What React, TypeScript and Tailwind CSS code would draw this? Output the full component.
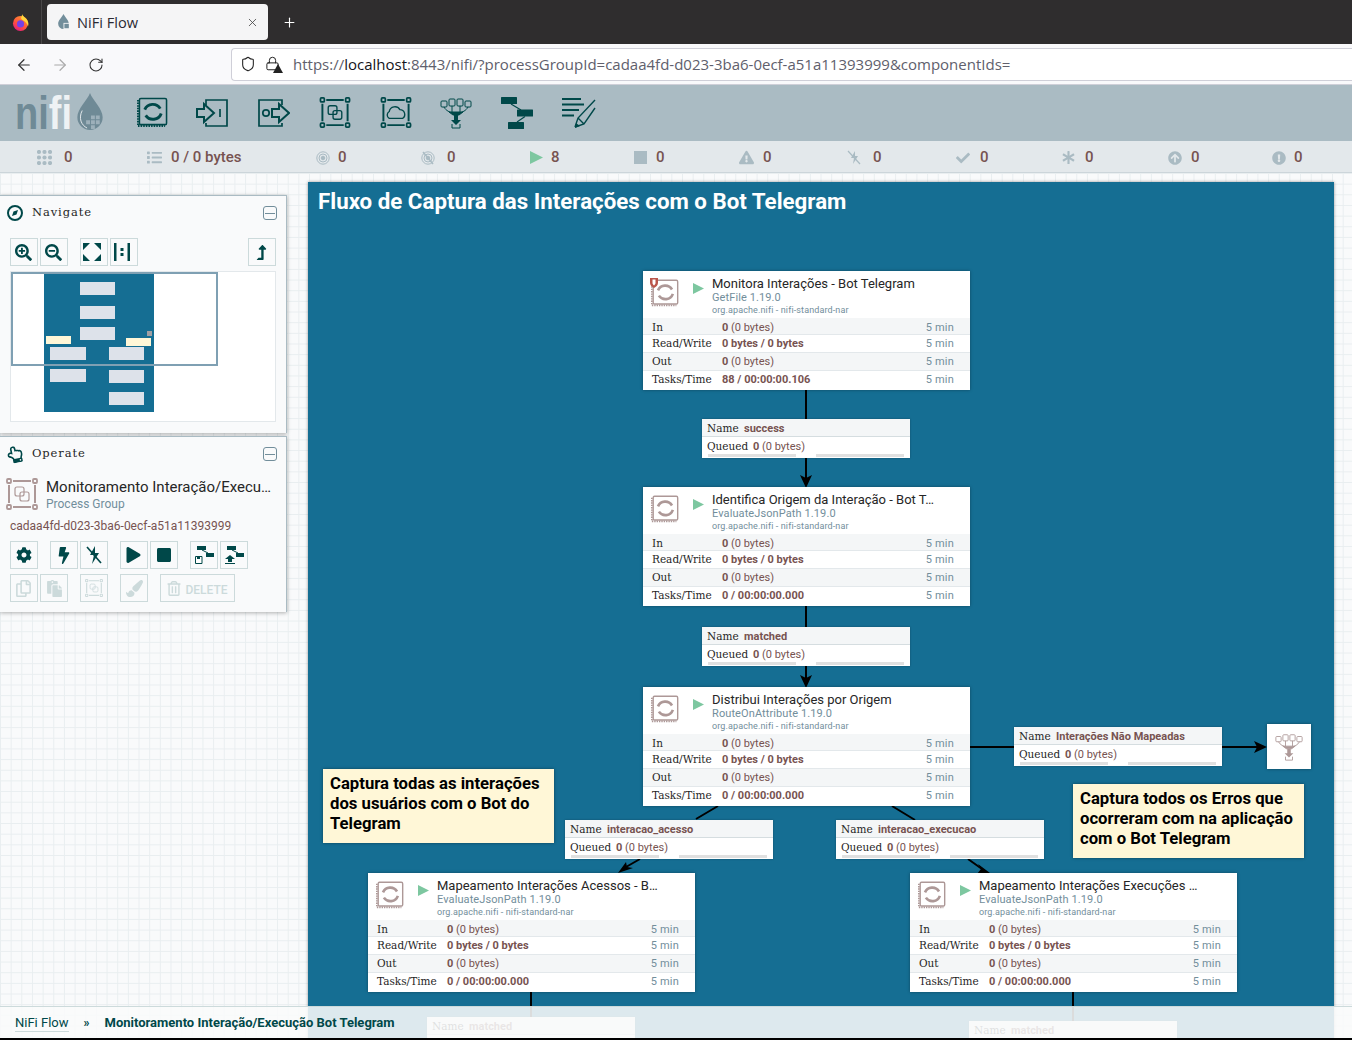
import { ArrowLeft, ArrowRight, RotateCw, Shield, Lock, X, Plus } from "lucide-react";
import {
  FaAsterisk,
  FaArrowCircleUp,
  FaBolt,
  FaCheck,
  FaCog,
  FaExclamationCircle,
  FaExclamationTriangle,
  FaList,
  FaPaintBrush,
  FaPlay,
  FaRegCopy,
  FaPaste,
  FaRegHandPointUp,
  FaRegTrashAlt,
  FaSearchMinus,
  FaSearchPlus,
  FaStop,
  FaLevelUpAlt,
} from "react-icons/fa";
import type { ReactNode } from "react";

const TOP = 173;

// nifi glyphs drawn by hand, the icon packs don't have them
function ProcessorIcon({ className = "", color = "#004849" }: { className?: string; color?: string }) {
  return (
    <svg viewBox="0 0 32 32" className={className} fill="none" stroke={color}>
      <rect x="2.5" y="1.5" width="28" height="27" rx="1.5" strokeWidth="1.6" />
      <path d="M1 3v27h28" strokeWidth="2" strokeDasharray="1.6 1.1" />
      <path d="M8 13a9 9 0 0 1 16-1" strokeWidth="3" />
      <path d="M25 17a9 9 0 0 1-16 2" strokeWidth="3" />
    </svg>
  );
}

function InputPortIcon({ className = "" }: { className?: string }) {
  return (
    <svg viewBox="0 0 32 28" className={className} fill="none" stroke="#004849" strokeWidth="1.7">
      <path d="M10 6V1h21v26H10v-3" />
      <path d="M1 10h7V5l10 9-10 9v-5H1z" strokeWidth="2" />
      <path d="M24 10v8" />
    </svg>
  );
}

function OutputPortIcon({ className = "" }: { className?: string }) {
  return (
    <svg viewBox="0 0 32 28" className={className} fill="none" stroke="#004849" strokeWidth="1.7">
      <path d="M24 6V1H1v26h23v-3" />
      <circle cx="8" cy="14" r="3.2" />
      <path d="M14 10h7V5l10 9-10 9v-5h-7z" strokeWidth="2" />
    </svg>
  );
}

function GroupFrame({ children, className = "", color = "#004849" }: { children: ReactNode; className?: string; color?: string }) {
  return (
    <svg viewBox="0 0 32 32" className={className} fill="none" stroke={color} strokeWidth="1.6">
      <rect x="1" y="1" width="4" height="4" rx="1" strokeWidth="1.8" />
      <rect x="27" y="1" width="4" height="4" rx="1" strokeWidth="1.8" />
      <rect x="1" y="27" width="4" height="4" rx="1" strokeWidth="1.8" />
      <rect x="27" y="27" width="4" height="4" rx="1" strokeWidth="1.8" />
      <path d="M7 3h18M7 29h18M3 7v18M29 7v18" strokeWidth="2" />
      {children}
    </svg>
  );
}

function FunnelIcon({ className = "", color = "#004849" }: { className?: string; color?: string }) {
  return (
    <svg viewBox="0 0 32 32" className={className} fill="none" stroke={color} strokeWidth="1">
      <rect x="1" y="4" width="6" height="6" rx="1" />
      <rect x="9" y="2" width="6" height="7" rx="1" />
      <rect x="17" y="2" width="6" height="7" rx="1" />
      <rect x="25" y="4" width="6" height="6" rx="1" />
      <path d="M4 10c2 4 6 5 8 6M12 9v6M20 9v6M28 10c-2 4-6 5-8 6" />
      <path d="M9 15h14l-4 3h-6z" fill={color} />
      <path d="M14 18h4v5h3l-5 5-5-5h3z" fill={color} stroke="none" />
      <path d="M12 27v4h8v-4" />
    </svg>
  );
}

function TemplateIcon({ className = "" }: { className?: string }) {
  return (
    <svg viewBox="0 0 32 32" className={className} fill="#004849" stroke="#004849">
      <rect x="0" y="0" width="16" height="7" rx="0.5" stroke="none" />
      <rect x="16" y="12.5" width="16" height="7" rx="0.5" stroke="none" />
      <rect x="7" y="25" width="16" height="7" rx="0.5" stroke="none" />
      <path d="M10 7l10 6M24 19.5L16 25" strokeWidth="1.2" fill="none" />
    </svg>
  );
}

function LabelIcon({ className = "" }: { className?: string }) {
  return (
    <svg viewBox="0 0 34 32" className={className} fill="none" stroke="#004849">
      <path d="M0 2h19M0 7.5h22M0 13h17M0 18.5h12" strokeWidth="2.2" />
      <path d="M13 30l3-9L33 3M13 30l9-3L33 11M16 21l6 6" strokeWidth="1.4" />
      <path d="M13 31l1-5 4 3z" fill="#004849" stroke="none" />
    </svg>
  );
}

function StatusIcon({ kind }: { kind: string }) {
  if (kind === "grid")
    return (
      <svg viewBox="0 0 15 15" className="w-[15px] h-[15px]" fill="#aabbc3">
        {[2, 7.5, 13].map((y) =>
          [2, 7.5, 13].map((x) => <circle key={`${x}-${y}`} cx={x} cy={y} r="2.1" />)
        )}
      </svg>
    );
  if (kind === "list") return <FaList className="w-[15px] h-[15px] text-[#aabbc3]" />;
  if (kind === "tx" || kind === "notx")
    return (
      <svg viewBox="0 0 14 14" className="w-[14px] h-[14px]" fill="none" stroke="#aabbc3">
        <circle cx="7" cy="7" r="6.2" />
        <circle cx="7" cy="7" r="4" />
        <circle cx="7" cy="7" r="1.8" fill="#aabbc3" />
        {kind === "notx" && <path d="M2 1l10 12" strokeWidth="1.5" />}
      </svg>
    );
  if (kind === "play")
    return (
      <svg viewBox="0 0 13 13" className="w-[13px] h-[13px]">
        <path d="M0 0l13 6.5L0 13z" fill="#7dc7a0" />
      </svg>
    );
  if (kind === "stop") return <div className="w-[13px] h-[13px] bg-[#aabbc3]" />;
  if (kind === "warn") return <FaExclamationTriangle className="w-[15px] h-[15px] text-[#aabbc3]" />;
  if (kind === "off")
    return (
      <svg viewBox="0 0 14 15" className="w-[14px] h-[15px]" fill="none" stroke="#aabbc3">
        <path d="M8 1L4 8h3l-1 6 5-8H8z" fill="#aabbc3" stroke="none" />
        <path d="M1 1l12 13" strokeWidth="1.2" />
      </svg>
    );
  if (kind === "check") return <FaCheck className="w-[14px] h-[14px] text-[#aabbc3]" />;
  if (kind === "star") return <FaAsterisk className="w-[13px] h-[13px] text-[#aabbc3]" />;
  if (kind === "up") return <FaArrowCircleUp className="w-[14px] h-[14px] text-[#aabbc3]" />;
  return <FaExclamationCircle className="w-[14px] h-[14px] text-[#aabbc3]" />;
}

const statusItems = [
  { kind: "grid", text: "0", cls: "w-[110px] gap-[12px]" },
  { kind: "list", text: "0 / 0 bytes", cls: "w-[169px] gap-[9px]" },
  { kind: "tx", text: "0", cls: "w-[105px] gap-[8px]" },
  { kind: "notx", text: "0", cls: "w-[109px] gap-[12px]" },
  { kind: "play", text: "8", cls: "w-[104px] gap-[8px]" },
  { kind: "stop", text: "0", cls: "w-[105px] gap-[9px]" },
  { kind: "warn", text: "0", cls: "w-[108px] gap-[9px]" },
  { kind: "off", text: "0", cls: "w-[109px] gap-[12px]" },
  { kind: "check", text: "0", cls: "w-[106px] gap-[10px]" },
  { kind: "star", text: "0", cls: "w-[106px] gap-[10px]" },
  { kind: "up", text: "0", cls: "w-[104px] gap-[9px]" },
  { kind: "err", text: "0", cls: "w-[60px] gap-[8px]" },
];

const slab = "font-['DejaVu_Serif',serif] text-[10.5px] text-[#262626]";

function Processor({ x, y, name, type, shield, tasks }: { x: number; y: number; name: string; type: string; shield?: boolean; tasks: string }) {
  const rows = [
    { label: "In", val: <><b className="font-bold">0</b> (0 bytes)</>, cls: "h-[17px] pt-[1px] bg-[#f4f6f7]" },
    { label: "Read/Write", val: <b className="font-bold">0 bytes / 0 bytes</b>, cls: "h-[18px] bg-white" },
    { label: "Out", val: <><b className="font-bold">0</b> (0 bytes)</>, cls: "h-[18px] bg-[#f4f6f7]" },
    { label: "Tasks/Time", val: <b className="font-bold">{tasks}</b>, cls: "h-[19px] bg-white" },
  ];
  return (
    <div className="absolute w-[327px] h-[119px] bg-white shadow-[0_0_3px_rgba(0,0,0,0.35)]" style={{ left: x, top: y - TOP }}>
      <div className="relative h-[47px]">
        <ProcessorIcon color="#ad9897" className="absolute left-[8px] top-[8px] w-[28px] h-[28px]" />
        {shield && (
          <svg viewBox="0 0 8 10" className="absolute left-[7px] top-[7px] w-[8px] h-[10px]">
            <path d="M0 0h8v5c0 2-2 4-4 5-2-1-4-3-4-5z" fill="#ba554a" />
            <path d="M2.5 1.5h3v3.5c0 1-.8 1.8-1.5 2.4-.7-.6-1.5-1.4-1.5-2.4z" fill="#fff" />
          </svg>
        )}
        <svg viewBox="0 0 11 11" className="absolute left-[50px] top-[12px] w-[11px] h-[11px]">
          <path d="M0 0l11 5.5L0 11z" fill="#7dc7a0" />
        </svg>
        <div className="absolute left-[69px] top-[5px] text-[13px] leading-[16px] text-[#262626] whitespace-nowrap">{name}</div>
        <div className="absolute left-[69px] top-[20px] text-[11px] leading-[13px] text-[#728e9b] whitespace-nowrap tracking-[0.1px]">{type}</div>
        <div className="absolute left-[69px] top-[33px] text-[9px] leading-[12px] tracking-[0.12px] text-[#728e9b] whitespace-nowrap">org.apache.nifi - nifi-standard-nar</div>
      </div>
      {rows.map((r) => (
        <div key={r.label} className={`flex items-baseline leading-[16px] border-b border-[#e3e8eb] last:border-b-0 text-[11px] ${r.cls}`}>
          <span className={`w-[79px] pl-[9px] ${slab}`}>{r.label}</span>
          <span className="flex-1 text-[#775351] whitespace-nowrap">{r.val}</span>
          <span className="pr-[16px] tracking-[0.2px] text-[#728e9b]">5 min</span>
        </div>
      ))}
    </div>
  );
}

function ConnLabel({ x, y, name, peek }: { x: number; y: number; name: string; peek?: boolean }) {
  return (
    <div className={`absolute w-[208px] bg-white shadow-[0_0_2px_rgba(0,0,0,0.3)] ${peek ? "h-[30px]" : "h-[39px]"}`} style={{ left: x, top: y - TOP }}>
      <div className="flex items-baseline h-[18px] leading-[19px] bg-[#f4f6f7] border-b border-[#d5dde0] pl-[5px] text-[11px]">
        <span className={`w-[37px] ${slab}`}>Name</span>
        <b className="font-bold text-[#775351] whitespace-nowrap">{name}</b>
      </div>
      {!peek && (
        <>
          <div className="flex items-baseline h-[16px] leading-[16px] mt-[1px] pl-[5px] text-[11px]">
            <span className={`w-[46px] ${slab}`}>Queued</span>
            <span className="text-[#775351] whitespace-nowrap"><b className="font-bold">0</b> (0 bytes)</span>
          </div>
          <div className="flex gap-[20px] pl-[6px]">
            <div className="w-[88px] h-[3px] bg-[#e0e0e0]" />
            <div className="w-[88px] h-[3px] bg-[#e0e0e0]" />
          </div>
        </>
      )}
    </div>
  );
}

function Note({ x, y, lines }: { x: number; y: number; lines: string[] }) {
  return (
    <div className="absolute w-[231px] h-[74px] bg-[#fff7d7] shadow-[0_0_3px_rgba(0,0,0,0.4)] pl-[7px] pt-[5px] text-[16.7px] leading-[20px] font-bold text-black" style={{ left: x, top: y - TOP }}>
      {lines.map((l) => (
        <div key={l} className="whitespace-nowrap">{l}</div>
      ))}
    </div>
  );
}

function ToolBtn({ children, className = "" }: { children: ReactNode; className?: string }) {
  return <div className={`flex items-center justify-center h-[28px] w-[28px] border border-[#ccdadb] text-[#004849] ${className}`}>{children}</div>;
}

function Collapse() {
  return (
    <div className="flex items-center justify-center w-[14px] h-[14px] rounded-[3px] border border-[#728e9b]">
      <div className="w-[10px] h-[1px] bg-[#728e9b]" />
    </div>
  );
}

const minimapBoxes = [
  "left-[36px] top-[9px] w-[35px] h-[13px] bg-[#dde2ea]",
  "left-[36px] top-[33px] w-[35px] h-[13px] bg-[#dde2ea]",
  "left-[36px] top-[54px] w-[35px] h-[13px] bg-[#dde2ea]",
  "left-[2px] top-[63px] w-[25px] h-[8px] bg-[#fff7d7]",
  "left-[82px] top-[65px] w-[25px] h-[8px] bg-[#fff7d7]",
  "left-[103px] top-[58px] w-[5px] h-[5px] bg-[#a0a0a4]",
  "left-[6px] top-[74px] w-[36px] h-[13px] bg-[#dde2ea]",
  "left-[65px] top-[74px] w-[35px] h-[13px] bg-[#dde2ea]",
  "left-[6px] top-[96px] w-[36px] h-[13px] bg-[#dde2ea]",
  "left-[65px] top-[97px] w-[35px] h-[13px] bg-[#dde2ea]",
  "left-[65px] top-[119px] w-[35px] h-[13px] bg-[#dde2ea]",
];

export default function App() {
  return (
    <div className="flex flex-col w-[1352px] h-[1040px] overflow-hidden font-[Roboto,sans-serif]">
      {/* tab strip */}
      <div className="flex items-center h-[44px] bg-[#2f2d2e] shrink-0">
        <div className="flex items-center justify-center w-[42px] h-full border-r border-[#4a4849]">
          <svg viewBox="0 0 18 18" className="w-[17px] h-[17px]">
            <defs>
              <linearGradient id="fx" x1="0.8" y1="0" x2="0.2" y2="1">
                <stop offset="0" stopColor="#ff9a2e" />
                <stop offset="0.6" stopColor="#ff4f3e" />
                <stop offset="1" stopColor="#e31587" />
              </linearGradient>
            </defs>
            <circle cx="9" cy="10" r="8" fill="url(#fx)" />
            <circle cx="9" cy="10.5" r="3.8" fill="#7542e5" />
            <path d="M11 0c0 2 2 3 4 5 2 2 3 5 2 8-1-3-3-5-5-6-2-1-3-2-2-4 0-1 1-2 1-3z" fill="#ffd43b" />
          </svg>
        </div>
        <div className="relative flex items-center ml-[5px] w-[221px] h-[36px] bg-[#f5f5f6] rounded-[4px] pl-[10px]">
          <svg viewBox="0 0 14 18" className="w-[13px] h-[16px]">
            <path d="M7 0c2 4 6 7 6 11a6 6 0 0 1-12 0C1 7 5 4 7 0z" fill="#728e9b" />
            <rect x="7" y="10" width="7" height="7" fill="#f5f5f6" />
            <rect x="8" y="11" width="5" height="5" fill="#728e9b" />
          </svg>
          <span className="ml-[7px] pt-[2px] text-[14.6px] text-[#2b2a33] font-['Open_Sans',sans-serif]">NiFi Flow</span>
          <X className="absolute right-[9px] w-[13px] h-[13px] text-[#444]" strokeWidth={1.5} />
        </div>
        <Plus className="ml-[14px] w-[15px] h-[15px] text-white" strokeWidth={1.8} />
      </div>

      {/* url bar */}
      <div className="flex items-center h-[41px] bg-[#f9f9fb] shrink-0 border-b border-[#cfcfd8]">
        <ArrowLeft className="ml-[15px] mt-[1px] w-[18px] h-[18px] text-[#333]" strokeWidth={1.6} />
        <ArrowRight className="ml-[18px] mt-[1px] w-[18px] h-[18px] text-[#aaa]" strokeWidth={1.6} />
        <RotateCw className="ml-[19px] mt-[1px] w-[16px] h-[16px] text-[#333]" strokeWidth={1.6} />
        <div className="flex items-center ml-[127px] flex-1 h-[33px] bg-white border border-r-0 border-[#cfcfd8] rounded-l-[4px] pl-[8px]">
          <Shield className="w-[16px] h-[16px] text-[#222]" strokeWidth={1.6} />
          <div className="relative ml-[9px] w-[16px] h-[16px]">
            <Lock className="w-[15px] h-[15px] text-[#222]" strokeWidth={1.6} />
            <svg viewBox="0 0 10 9" className="absolute right-[-2px] bottom-[-1px] w-[10px] h-[9px]">
              <path d="M5 0l5 9H0z" fill="#222" />
            </svg>
          </div>
          <span className="ml-[12px] text-[15px] text-[#60606c] whitespace-nowrap font-['Open_Sans',sans-serif]">
            https://<span className="text-[#15141a]">localhost</span>:8443/nifi/?processGroupId=cadaa4fd-d023-3ba6-0ecf-a51a11393999&amp;componentIds=
          </span>
        </div>
      </div>

      {/* nifi header */}
      <div className="flex items-center h-[56px] bg-[#aabbc3] shrink-0">
        <div className="relative flex items-center w-[137px] h-full pl-[15px]">
          <span className="origin-center scale-y-[1.22] text-[38px] leading-[38px] font-bold font-['Liberation_Sans',sans-serif] text-[#6f8a96]">
            ni<span className="text-[#eef2f4]">fi</span>
          </span>
          <svg viewBox="0 0 26 38" className="absolute left-[77px] top-[8px] w-[26px] h-[37px]">
            <path d="M13 0c3 8 13 16 13 25a13 13 0 0 1-26 0C0 16 10 8 13 0z" fill="#6f8a96" />
            <path d="M5 18c-4 8-1 15 5 18" stroke="#e3e8eb" strokeWidth="1" fill="none" />
            <path d="M14 23h4v4h-4zM19 23h4v4h-4zM14 28h4v4h-4zM19 28h4v4h-4zM9 28h4v4H9zM14 33h4v4h-4z" fill="#9db0ba" />
          </svg>
        </div>
        <ProcessorIcon className="w-[31px] h-[31px] -mt-[1px]" />
        <InputPortIcon className="ml-[28px] w-[32px] h-[28px] -mt-[1px]" />
        <OutputPortIcon className="ml-[30px] w-[32px] h-[28px] -mt-[1px]" />
        <GroupFrame className="ml-[29px] w-[32px] h-[31px] -mt-[1px]">
          <rect x="9" y="9" width="9" height="9" rx="2" strokeWidth="1.4" />
          <rect x="14" y="14" width="9" height="9" rx="2" strokeWidth="1.4" />
        </GroupFrame>
        <GroupFrame className="ml-[29px] w-[32px] h-[31px] -mt-[1px]">
          <path d="M9 22a4 4 0 0 1 0-7 6 6 0 0 1 11-2 5 5 0 0 1 3 9z" strokeWidth="1.4" />
        </GroupFrame>
        <FunnelIcon className="ml-[28px] w-[32px] h-[32px]" />
        <TemplateIcon className="ml-[29px] w-[32px] h-[32px]" />
        <LabelIcon className="ml-[29px] w-[34px] h-[32px]" />
      </div>

      {/* status */}
      <div className="flex items-center h-[32px] pt-[2px] pl-[37px] bg-[#e3e8eb] shrink-0 border-b border-[#ccd5da] text-[15px] font-medium text-[#775351]">
        {statusItems.map((s) => (
          <div key={s.kind} className={`flex items-center shrink-0 ${s.cls}`}>
            <StatusIcon kind={s.kind} />
            <span className="whitespace-nowrap">{s.text}</span>
          </div>
        ))}
      </div>

      {/* canvas */}
      <div className="relative flex-1 overflow-hidden bg-[#f9fafb] bg-[linear-gradient(#e9eef0_1px,transparent_1px),linear-gradient(90deg,#e9eef0_1px,transparent_1px)] bg-[size:10.66px_10.66px]">
        <div className="absolute left-[308px] top-[9px] w-[1026px] h-[900px] bg-[#156e93] shadow-[0_0_3px_rgba(0,0,0,0.4)]">
          <div className="pl-[10px] pt-[4px] text-[22.3px] leading-[30px] font-bold text-white whitespace-nowrap">Fluxo de Captura das Interações com o Bot Telegram</div>
        </div>

        {/* connections */}
        <svg className="absolute left-0 top-0 w-[1352px] h-[865px]" viewBox={`0 ${TOP} 1352 865`} fill="none" stroke="#000" strokeWidth="2">
          <path d="M806 390v29M806 458v20M806 606v21M806 665v14M970 747h44M1222 747h36M718 806l-22 13M640 859l-14 8M892 806l23 14M968 859l14 10M531 992v26M1073 992v30" />
          <g fill="#000" stroke="none">
            <path d="M806 488l-6-13 6 3 6-3z" />
            <path d="M806 688l-6-13 6 3 6-3z" />
            <path d="M1267 747l-13-6 3 6-3 6z" />
            <path d="M618 873l8-11 1 5 6 1z" />
            <path d="M990 873l-13 1 4-5-3-5z" />
          </g>
        </svg>

        <Processor x={643} y={271} name="Monitora Interações - Bot Telegram" type="GetFile 1.19.0" shield tasks="88 / 00:00:00.106" />
        <ConnLabel x={702} y={419} name="success" />
        <Processor x={643} y={487} name="Identifica Origem da Interação - Bot T…" type="EvaluateJsonPath 1.19.0" tasks="0 / 00:00:00.000" />
        <ConnLabel x={702} y={627} name="matched" />
        <Processor x={643} y={687} name="Distribui Interações por Origem" type="RouteOnAttribute 1.19.0" tasks="0 / 00:00:00.000" />
        <ConnLabel x={1014} y={727} name="Interações Não Mapeadas" />
        <ConnLabel x={565} y={820} name="interacao_acesso" />
        <ConnLabel x={836} y={820} name="interacao_execucao" />
        <Processor x={368} y={873} name="Mapeamento Interações Acessos - B…" type="EvaluateJsonPath 1.19.0" tasks="0 / 00:00:00.000" />
        <Processor x={910} y={873} name="Mapeamento Interações Execuções …" type="EvaluateJsonPath 1.19.0" tasks="0 / 00:00:00.000" />
        <ConnLabel x={427} y={1017} name="matched" peek />
        <ConnLabel x={969} y={1021} name="matched" peek />

        <div className="absolute left-[1267px] top-[551px] flex items-center justify-center w-[44px] h-[45px] bg-white shadow-[0_0_3px_rgba(0,0,0,0.4)]">
          <FunnelIcon color="#ad9897" className="w-[28px] h-[30px]" />
        </div>

        <Note x={323} y={769} lines={["Captura todas as interações", "dos usuários com o Bot do", "Telegram"]} />
        <Note x={1073} y={784} lines={["Captura todos os Erros que", "ocorreram com na aplicação", "com o Bot Telegram"]} />

        {/* navigate panel */}
        <div className="absolute left-0 top-[22px] w-[287px] h-[238px] bg-[#f9fafb] border-r border-t border-[#aabbc3] shadow-[0_1px_4px_rgba(0,0,0,0.3)]">
          <div className="flex items-center justify-between h-[34px] pl-[7px] pr-[9px]">
            <div className="flex items-center gap-[9px]">
              <svg viewBox="0 0 16 16" className="w-[16px] h-[16px]" fill="none" stroke="#004849" strokeWidth="2">
                <circle cx="8" cy="8" r="7" />
                <path d="M11 5l-1.5 4.5L5 11l1.5-4.5z" fill="#004849" stroke="none" />
              </svg>
              <span className="font-['DejaVu_Serif',serif] text-[11.5px] tracking-[0.9px] text-[#262626]">Navigate</span>
            </div>
            <Collapse />
          </div>
          <div className="flex pl-[10px] pr-[10px] mt-[8px]">
            <ToolBtn><FaSearchPlus className="w-[17px] h-[17px] -ml-[1px]" /></ToolBtn>
            <ToolBtn className="ml-[2px]"><FaSearchMinus className="w-[17px] h-[17px] -ml-[1px]" /></ToolBtn>
            <ToolBtn className="ml-[12px]">
              <svg viewBox="0 0 20 20" className="w-[20px] h-[20px] -ml-[4px]" fill="#004849">
                <path d="M1 1h7L1 8zM19 1h-7l7 7zM1 19h7l-7-7zM19 19h-7l7-7z" />
              </svg>
            </ToolBtn>
            <ToolBtn className="ml-[2px]">
              <svg viewBox="0 0 20 20" className="w-[20px] h-[20px] -ml-[4px]" fill="#004849">
                <path d="M2 1h2.5v18H2zM15.5 1H18v18h-2.5zM8.5 6h3v3h-3zM8.5 11h3v3h-3z" />
              </svg>
            </ToolBtn>
            <ToolBtn className="ml-auto"><FaLevelUpAlt className="w-[15px] h-[15px] -ml-[1px]" /></ToolBtn>
          </div>
          <div className="relative mt-[5px] ml-[10px] w-[266px] h-[151px] bg-white border border-[#e3e8eb]">
            <div className="absolute left-[33px] top-[1px] w-[110px] h-[139px] bg-[#156e93]">
              {minimapBoxes.map((c) => (
                <div key={c} className={`absolute ${c}`} />
              ))}
            </div>
            <div className="absolute left-0 top-0 w-[207px] h-[94px] border-2 border-[#7fa0b3]" />
          </div>
        </div>

        {/* operate panel */}
        <div className="absolute left-0 top-[263px] w-[287px] h-[176px] bg-[#f9fafb] border-r border-t border-[#aabbc3] shadow-[0_1px_4px_rgba(0,0,0,0.3)]">
          <div className="flex items-center justify-between h-[34px] pl-[7px] pr-[9px]">
            <div className="flex items-center gap-[9px]">
              <FaRegHandPointUp className="w-[16px] h-[17px] -rotate-12 text-[#004849]" />
              <span className="font-['DejaVu_Serif',serif] text-[11.5px] tracking-[0.9px] text-[#262626]">Operate</span>
            </div>
            <Collapse />
          </div>
          <div className="flex pl-[6px] mt-[7px]">
            <GroupFrame color="#ad9897" className="w-[32px] h-[32px] shrink-0">
              <rect x="9" y="9" width="9" height="9" rx="2" strokeWidth="1.2" />
              <rect x="14" y="14" width="9" height="9" rx="2" strokeWidth="1.2" />
            </GroupFrame>
            <div className="ml-[8px]">
              <div className="text-[15px] leading-[18px] text-[#262626] whitespace-nowrap">Monitoramento Interação/Execu…</div>
              <div className="pt-[1px] text-[12px] leading-[15px] text-[#728e9b]">Process Group</div>
            </div>
          </div>
          <div className="pl-[10px] mt-[6px] text-[12px] leading-[16px] text-[#775351]">cadaa4fd-d023-3ba6-0ecf-a51a11393999</div>
          <div className="flex pl-[10px] mt-[7px]">
            <ToolBtn><FaCog className="w-[16px] h-[16px] -ml-[1px]" /></ToolBtn>
            <ToolBtn className="ml-[12px]"><FaBolt className="w-[14px] h-[17px] -ml-[1px]" /></ToolBtn>
            <ToolBtn className="ml-[2px]">
              <svg viewBox="0 0 18 20" className="w-[18px] h-[20px] -ml-[1px]" fill="none" stroke="#004849">
                <path d="M10 1L5 10h4l-2 9 7-11h-4z" fill="#004849" stroke="none" />
                <path d="M2 2l14 16" strokeWidth="1.6" />
              </svg>
            </ToolBtn>
            <ToolBtn className="ml-[12px]"><FaPlay className="w-[15px] h-[16px] -ml-[2px]" /></ToolBtn>
            <ToolBtn className="ml-[2px]"><FaStop className="w-[16px] h-[16px] -ml-[1px]" /></ToolBtn>
            <ToolBtn className="ml-[12px]">
              <svg viewBox="0 0 20 20" className="w-[20px] h-[20px]" fill="#004849" stroke="#004849">
                <rect x="3" y="1" width="9" height="4" stroke="none" />
                <rect x="12" y="8" width="8" height="4" stroke="none" />
                <path d="M8 5l6 3" fill="none" />
                <path d="M1.5 11.5h6.5v7H1.5z" fill="#fff" />
                <rect x="3" y="12" width="3" height="2" stroke="none" />
              </svg>
            </ToolBtn>
            <ToolBtn className="ml-[2px]">
              <svg viewBox="0 0 20 20" className="w-[20px] h-[20px]" fill="#004849" stroke="#004849">
                <rect x="3" y="1" width="9" height="4" stroke="none" />
                <rect x="12" y="8" width="8" height="4" stroke="none" />
                <path d="M8 5l6 3" fill="none" />
                <path d="M6 10l5 4H8v3H4v-3H1zM1 18h10v1H1z" stroke="none" />
              </svg>
            </ToolBtn>
          </div>
          <div className="flex pl-[10px] mt-[5px] text-[#ccdadb]">
            <ToolBtn className="!text-[#ccdadb]"><FaRegCopy className="w-[17px] h-[17px] -ml-[2px]" /></ToolBtn>
            <ToolBtn className="ml-[2px] !text-[#ccdadb]"><FaPaste className="w-[17px] h-[17px]" /></ToolBtn>
            <ToolBtn className="ml-[12px]">
              <GroupFrame color="#ccdadb" className="w-[18px] h-[18px]">
                <rect x="9" y="9" width="9" height="9" rx="2" strokeWidth="1.4" />
                <rect x="14" y="14" width="9" height="9" rx="2" strokeWidth="1.4" />
              </GroupFrame>
            </ToolBtn>
            <ToolBtn className="ml-[12px] !text-[#ccdadb]"><FaPaintBrush className="w-[17px] h-[17px]" /></ToolBtn>
            <div className="flex items-center justify-center ml-[12px] h-[28px] w-[75px] gap-[4px] border border-[#ccdadb] text-[#ccdadb]">
              <FaRegTrashAlt className="w-[14px] h-[15px]" />
              <span className="pt-[3px] text-[12px] font-medium">DELETE</span>
            </div>
          </div>
        </div>

        {/* breadcrumb */}
        <div className="absolute left-0 bottom-0 flex items-center w-full h-[32px] pt-[1px] pl-[15px] bg-[#f9fafb]/88 border-t border-[#ccdadb] text-[#004849]">
          <span className="text-[13px] leading-[17px] border-b border-[#ccdadb]">NiFi Flow</span>
          <span className="ml-[15px] text-[12px] font-bold">»</span>
          <span className="ml-[15px] text-[13px] font-bold whitespace-nowrap">Monitoramento Interação/Execução Bot Telegram</span>
        </div>
      </div>
      <div className="h-[2px] bg-black shrink-0" />
    </div>
  );
}
